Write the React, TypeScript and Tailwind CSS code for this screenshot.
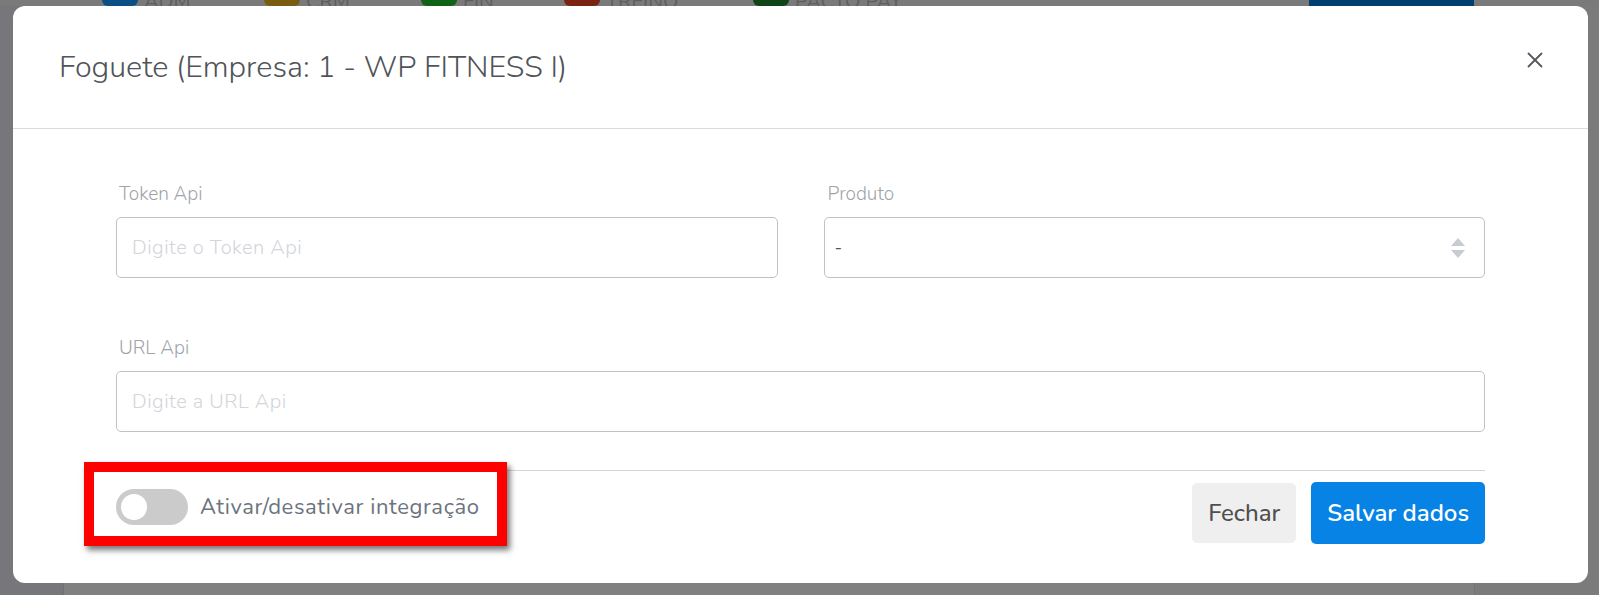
import { X } from "lucide-react";

const font = "font-['Nunito','Lato','Liberation_Sans',sans-serif]";

const topApps = [
  { name: "ADM", color: "bg-[#0b4f86]", w: "w-[162px]" },
  { name: "CRM", color: "bg-[#7a5c10]", w: "w-[157px]" },
  { name: "FIN", color: "bg-[#0e6314]", w: "w-[143px]" },
  { name: "TREINO", color: "bg-[#7a2312]", w: "w-[189px]" },
  { name: "PACTO PAY", color: "bg-[#0f4418]", w: "w-[200px]" },
];

const App = () => {
  return (
    <main className={`relative w-full h-[595px] overflow-hidden bg-[#7a7a7a] ${font}`}>
      {/* Page behind the overlay */}
      <div className="flex flex-col h-full">
        <div className="h-[6px] flex items-end pl-[102px]">
          {topApps.map((app) => (
            <div key={app.name} className={`flex items-end ${app.w}`}>
              <span className={`w-[36px] h-[6px] rounded-b-full ${app.color}`}></span>
              <span className="ml-[6px] text-[20px] leading-[6px] h-[6px] overflow-hidden text-[#5e5e5e]">
                <span className="block -mt-[8px] leading-[20px]">{app.name}</span>
              </span>
            </div>
          ))}
          <div className="ml-auto mr-[125px] w-[165px] h-[6px] bg-[#023f71]"></div>
        </div>
        <div className="flex-1 flex">
          <div className="w-[64px] bg-[#77777b] border-r border-[#707070]"></div>
          <div className="flex-1 bg-[#808080]"></div>
          <div className="w-[125px] bg-[#7b7b7b] border-l border-[#737373]"></div>
        </div>
      </div>

      {/* Modal */}
      <div className="absolute top-[6px] left-[13px] w-[1575px] h-[577px] bg-white rounded-[12px] flex flex-col">
        <div className="h-[123px] flex items-center justify-between pl-[46px] pr-[40px] border-b border-[#dcdcdc]">
          <h1 className="text-[30.5px] text-[#505459] font-light mt-[1px]">
            Foguete (Empresa: 1 - WP FITNESS I)
          </h1>
          <button className="text-[#555a60] -mt-[14px]">
            <X size={26} strokeWidth={1.7} />
          </button>
        </div>

        <div className="px-[103px] pt-[51px] flex flex-col">
          <div className="grid grid-cols-2 gap-[46px]">
            <div>
              <label className="block pl-[3px] text-[19px] leading-[28px] text-[#a0a3ab] font-light">Token Api</label>
              <div className="mt-[9px] h-[61px] border border-[#c0c2c9] rounded-[5px] flex items-center px-[15px] text-[20px] tracking-[0.5px] text-[#d3d5db] font-light">
                Digite o Token Api
              </div>
            </div>
            <div>
              <label className="block pl-[4px] text-[19px] leading-[28px] text-[#a0a3ab] font-light">Produto</label>
              <div className="mt-[9px] h-[61px] border border-[#c0c2c9] rounded-[5px] flex items-center justify-between pl-[10px] pr-[18px] text-[18px] text-[#555]">
                <span>-</span>
                <svg width="16" height="22" viewBox="0 0 16 22">
                  <polygon points="8,1 15,9 1,9" fill="#c9cbd3" />
                  <polygon points="1,13 15,13 8,21" fill="#c9cbd3" />
                </svg>
              </div>
            </div>
          </div>

          <div className="mt-[56px]">
            <label className="block pl-[3px] text-[19px] leading-[28px] text-[#a0a3ab] font-light">URL Api</label>
            <div className="mt-[9px] h-[61px] border border-[#c0c2c9] rounded-[5px] flex items-center px-[15px] text-[20px] tracking-[0.5px] text-[#d3d5db] font-light">
              Digite a URL Api
            </div>
          </div>

          <div className="mt-[38px] border-t border-[#d6d6d6] flex items-start justify-between">
            <div className="mt-[18px] flex items-center gap-[12px]">
              <span className="w-[72px] h-[36px] rounded-full bg-[#cbcbcb] flex items-center pl-[5px]">
                <span className="w-[26px] h-[26px] rounded-full bg-white"></span>
              </span>
              <span className="text-[22px] tracking-[0.6px] text-[#6b737d]">Ativar/desativar integração</span>
            </div>
            <div className="mt-[11px] flex items-center gap-[15px]">
              <button className="h-[60px] px-[16px] rounded-[5px] bg-[#efefef] text-[24px] font-medium text-[#4f4f4f]">
                Fechar
              </button>
              <button className="h-[62px] px-[16px] rounded-[5px] bg-[#0683e5] text-[24px] font-semibold text-white">
                Salvar dados
              </button>
            </div>
          </div>
        </div>
      </div>

      {/* Annotation box */}
      <div className="absolute left-[84px] top-[462px] w-[423px] h-[84px] border-[10px] border-[#ff0000] shadow-[3px_4px_6px_rgba(0,0,0,0.55)]"></div>
    </main>
  );
};

export default App;
